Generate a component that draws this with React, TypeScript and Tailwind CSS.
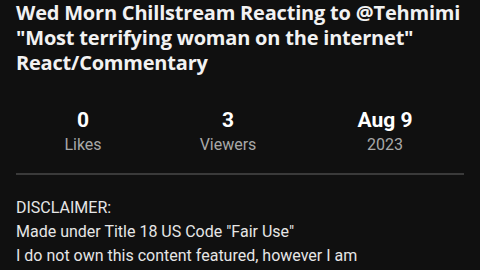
export default function App() {
  const stats = [
    { value: "0", label: "Likes" },
    { value: "3", label: "Viewers" },
    { value: "Aug 9", label: "2023" },
  ];

  return (
    <div className="w-[480px] h-[270px] overflow-hidden bg-[#101010] text-white">
      {/* Title */}
      <h1
        className="px-4 pt-[-1px] text-[20px] leading-[25px] font-bold tracking-[-0.2px] text-[#f2f2f2] whitespace-nowrap"
        style={{ fontFamily: '"Open Sans", sans-serif' }}
      >
        Wed Morn Chillstream Reacting to @Tehmimi
        <br />
        "Most terrifying woman on the internet"
        <br />
        React/Commentary
      </h1>

      {/* Stats */}
      <div
        className="mt-[32px] grid grid-cols-[152px_138px_176px] pl-[7px]"
        style={{ fontFamily: "Roboto, sans-serif" }}
      >
        {stats.map((s) => (
          <div key={s.label} className="flex flex-col items-center">
            <span className="text-[21px] leading-[26px] font-bold">{s.value}</span>
            <span className="text-[16px] leading-[23px] text-[#a8a8a8]">{s.label}</span>
          </div>
        ))}
      </div>

      <div className="mx-4 mt-[17px] h-[2px] bg-[#3a3a3a]" />

      {/* Description */}
      <div
        className="px-4 pt-[21px] text-[16px] leading-[24px] text-[#e6e6e6]"
        style={{ fontFamily: "Roboto, sans-serif" }}
      >
        <p>DISCLAIMER:</p>
        <p>Made under Title 18 US Code "Fair Use"</p>
        <p>I do not own this content featured, however I am</p>
      </div>
    </div>
  );
}
